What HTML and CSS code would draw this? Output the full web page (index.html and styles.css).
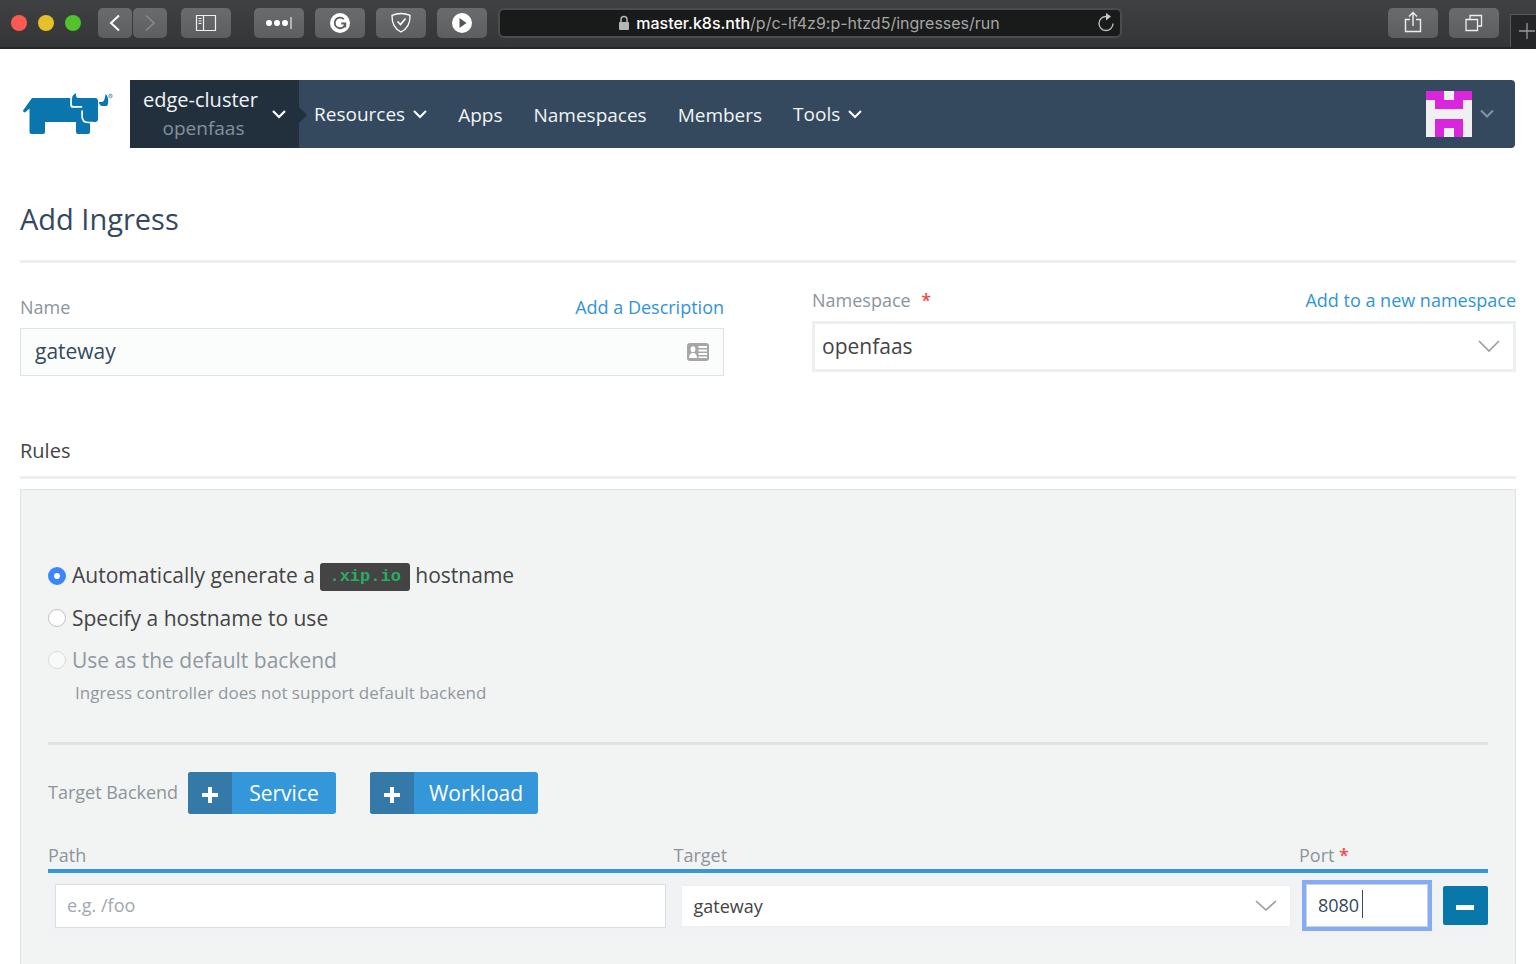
FILE: index.html
```html
<!DOCTYPE html>
<html lang="en">
<head>
<meta charset="utf-8">
<title>Add Ingress</title>
<link rel="stylesheet" href="styles.css">
</head>
<body>
<div class="chrome">
  <div class="lights"><span class="light red"></span><span class="light yellow"></span><span class="light green"></span></div>
  <div class="history">
    <button class="tool small" aria-label="Back"><svg width="34" height="30" viewBox="0 0 34 30"><path d="M21 7.500l-8 7.500 8 7.500" fill="none" stroke="#fff" stroke-width="2"/></svg></button>
    <button class="tool small" aria-label="Forward"><svg width="34" height="30" viewBox="0 0 34 30"><path d="M13 7.500l8 7.500-8 7.500" fill="none" stroke="#8a8b8d" stroke-width="1.500"/></svg></button>
  </div>
  <button class="tool sidebar" aria-label="Sidebar"><svg width="50" height="30" viewBox="0 0 50 30"><path d="M15.500 7.500h19v15h-19zM22.500 7.500v15M17.500 10.500h3M17.500 13h3M17.500 15.500h3" fill="none" stroke="#f0f0f0" stroke-width="1.200"/></svg></button>
  <div class="extensions">
    <button class="tool" aria-label="Passwords"><svg width="50" height="30" viewBox="0 0 50 30"><g fill="#fff"><circle cx="15" cy="15" r="3"/><circle cx="23" cy="15" r="3"/><circle cx="31" cy="15" r="3"/></g><path d="M37 9v12" stroke="#d5d5d5" stroke-width="1.400"/></svg></button>
    <button class="tool" aria-label="Grammar"><svg width="50" height="30" viewBox="0 0 50 30"><circle cx="25" cy="15" r="10" fill="#fff"/><path d="M28.800 11.200a5.300 5.300 0 1 0 1.500 4.300h-4M30.300 15.500v4" fill="none" stroke="#5b5c5e" stroke-width="1.800"/></svg></button>
    <button class="tool" aria-label="Ad blocker"><svg width="50" height="30" viewBox="0 0 50 30"><path d="M25 5.500c3 0 6.500.7 9 1.800.3 8-2.500 13.500-9 16.700-6.500-3.200-9.300-8.700-9-16.700 2.500-1.100 6-1.800 9-1.800z" fill="none" stroke="#fff" stroke-width="1.300"/><path d="M21.500 13.500l3 3 5-6" fill="none" stroke="#fff" stroke-width="1.600"/></svg></button>
    <button class="tool" aria-label="Play"><svg width="50" height="30" viewBox="0 0 50 30"><circle cx="25" cy="15" r="10" fill="#fff"/><path d="M22.500 10v10l7-5z" fill="#555658"/></svg></button>
  </div>
  <div class="address">
    <div class="url"><svg width="12" height="16" viewBox="0 0 12 16"><path d="M3 7V4.500a3 3 0 0 1 6 0V7" fill="none" stroke="#b5b5b5" stroke-width="1.500"/><rect x="1" y="7" width="10" height="8" rx="1" fill="#b5b5b5"/></svg><span><b>master.k8s.nth</b>/p/c-lf4z9:p-htzd5/ingresses/run</span></div>
    <button class="reload" aria-label="Reload"><svg width="18" height="20" viewBox="0 0 18 20"><path d="M9 3.500a7 7 0 1 0 7 7" fill="none" stroke="#b8b8b8" stroke-width="1.400"/><path d="M9 0l5 3.500-5 4z" fill="#c8c8c8"/></svg></button>
  </div>
  <div class="actions">
    <button class="tool" aria-label="Share"><svg width="50" height="30" viewBox="0 0 50 30"><path d="M22 11.500h-4.500v12h15v-12H28M25 18V5M21 8.500L25 4.500l4 4" fill="none" stroke="#eee" stroke-width="1.400"/></svg></button>
    <button class="tool" aria-label="Tab overview"><svg width="50" height="30" viewBox="0 0 50 30"><path d="M17 11.500h11.500V22.500H17zM21 11V7.500h11.500v10.500H29" fill="none" stroke="#eee" stroke-width="1.300"/></svg></button>
  </div>
  <button class="newtab" aria-label="New tab"><svg width="16" height="16" viewBox="0 0 16 16"><path d="M8 0v16M0 8h16" stroke="#999" stroke-width="1.300"/></svg></button>
</div>

<header class="header">
  <a class="logo" href="#" aria-label="Rancher"><svg width="92" height="42" viewBox="0 0 92 42"><g fill="#0b76ad"><path d="M10 5H48.500V13q0 1.500 1.500 1.500H60v9q0 6.500 7 6.500h1V39q0 2-2 2H56q-2 0-2-2V29H23V39q0 2-2 2H9.500q-2 0-2-2V15.500L3 19.500q-2 0-2-2z"/><path d="M50 11.500V6q.3-4 3-5.500h1c0 3.500.5 4.500 2.500 4.500H73q3 0 3 3V26q0 3-3 3H66.500q-5.500 0-5.500-5.500V18l-1.500-1v-3.500H52q-2 0-2-2z"/><path d="M77 9h3q3-1 3.500-8c3 2.500 3 7 2.500 10q-.3 2-2 2h-4q-3-1-3-4z"/></g><path d="M49.200 4v8q0 1.800 2 1.800h9M60 17.500v6q0 6 6.500 6H71" fill="none" stroke="#fff" stroke-width="1.500"/><circle cx="88.500" cy="3" r="1.800" fill="none" stroke="#0b76ad" stroke-width=".6"/><path d="M88 4V2h1v1l.5 1" fill="none" stroke="#0b76ad" stroke-width=".4"/></svg></a>
  <nav class="nav">
    <button class="cluster">
      <span class="scope"><span>edge-cluster</span><span class="project">openfaas</span></span>
      <svg class="chev" width="14" height="10" viewBox="0 0 14 10"><path d="M1 2l6 6 6-6" fill="none" stroke="#fff" stroke-width="2.200"/></svg>
    </button>
    <div class="links">
      <button class="drop">Resources <svg width="14" height="10" viewBox="0 0 14 10"><path d="M1 2l6 6 6-6" fill="none" stroke="#fff" stroke-width="2"/></svg></button>
      <a href="#">Apps</a>
      <a href="#">Namespaces</a>
      <a href="#">Members</a>
      <button class="drop">Tools <svg width="14" height="10" viewBox="0 0 14 10"><path d="M1 2l6 6 6-6" fill="none" stroke="#fff" stroke-width="2"/></svg></button>
    </div>
    <button class="user" aria-label="Account">
      <svg width="46" height="46" viewBox="0 0 5 5" shape-rendering="crispEdges"><path d="M0 0h5v5H0z" fill="#f0f0f0"/><path d="M0 0h2v1h1V0h2v1H4v1H1V1H0zM1 3h3v2H3V4H2v1H1z" fill="#d926dc"/></svg>
      <svg width="14" height="10" viewBox="0 0 14 10"><path d="M1 1.500l6 6 6-6" fill="none" stroke="#84929d" stroke-width="2"/></svg>
    </button>
  </nav>
</header>

<main class="main">
  <h1>Add Ingress</h1>
  <form class="form">
    <div class="fields">
      <div class="field name">
        <div class="labels"><label for="name">Name</label><a href="#">Add a Description</a></div>
        <div class="control"><input id="name" type="text" value="gateway"><svg class="card" width="22" height="18" viewBox="0 0 22 18"><rect width="22" height="18" rx="3" fill="#a6a6a6"/><g fill="#fff"><ellipse cx="6" cy="6.200" rx="2.400" ry="3"/><path d="M2 15c0-3 1.500-4.500 3-5h2c1.500.5 3 2 3 5zM11.500 3H20v2h-8.500zM11.500 6.500H20v2h-8.500zM11.500 10H20v2h-8.500zM11.500 13.500H20V15h-8.500z"/></g></svg></div>
      </div>
      <div class="field">
        <div class="labels"><label for="ns">Namespace <span class="req">*</span></label><a href="#">Add to a new namespace</a></div>
        <div class="control"><select id="ns"><option>openfaas</option></select><svg class="arrow" width="22" height="12" viewBox="0 0 22 12"><path d="M1 1l10 10L21 1" fill="none" stroke="#929ba1" stroke-width="1.600"/></svg></div>
      </div>
    </div>
    <h2>Rules</h2>
    <section class="panel">
      <div class="choices">
        <label><input type="radio" name="host" checked><span>Automatically generate a <code>.xip.io</code> hostname</span></label>
        <label><input type="radio" name="host"><span>Specify a hostname to use</span></label>
        <label class="off"><input type="radio" name="host" disabled><span>Use as the default backend</span></label>
        <p>Ingress controller does not support default backend</p>
      </div>
      <div class="backend">
        <span class="caption">Target Backend</span>
        <button type="button" class="add service"><span class="plus"><svg width="16" height="16" viewBox="0 0 16 16"><path d="M8 0v16M0 8h16" stroke="#fff" stroke-width="4"/></svg></span><span class="text">Service</span></button>
        <button type="button" class="add workload"><span class="plus"><svg width="16" height="16" viewBox="0 0 16 16"><path d="M8 0v16M0 8h16" stroke="#fff" stroke-width="4"/></svg></span><span class="text">Workload</span></button>
      </div>
      <table>
        <colgroup><col><col><col class="c-port"><col class="c-remove"></colgroup>
        <thead><tr><th>Path</th><th>Target</th><th colspan="2">Port <span class="req">*</span></th></tr></thead>
        <tbody><tr>
          <td class="path"><input type="text" aria-label="Path" placeholder="e.g. /foo"></td>
          <td class="target"><div class="control"><select aria-label="Target"><option>gateway</option></select><svg class="arrow" width="22" height="12" viewBox="0 0 22 12"><path d="M1 1l10 9L21 1" fill="none" stroke="#929ba1" stroke-width="1.600"/></svg></div></td>
          <td class="port"><div class="control"><input type="text" aria-label="Port" value="8080"><span class="caret"></span></div></td>
          <td class="remove"><button type="button" aria-label="Remove"><svg width="18" height="5" viewBox="0 0 18 5"><path d="M0 0h18v5H0z" fill="#fff"/></svg></button></td>
        </tr></tbody>
      </table>
    </section>
  </form>
</main>
</body>
</html>
```

FILE: styles.css
```css
* { box-sizing: border-box; }
body {
  margin: 0;
  min-height: 100vh;
  display: flex;
  flex-direction: column;
  background: #fff;
  color: #444;
  font: 400 21px/28px "Open Sans", "Noto Sans", sans-serif;
}
button, input, select { font: inherit; color: inherit; margin: 0; }
button { border: 0; padding: 0; background: none; }
a { color: #3094d8; text-decoration: none; }
svg { display: block; flex: none; }

/* Browser toolbar */
.chrome {
  display: flex;
  height: 49px;
  padding: 8px 0 0 11px;
  background: linear-gradient(#404143, #343536);
  border-bottom: 2px solid #272526;
}
.lights { display: flex; gap: 11px; padding-top: 7px; width: 87px; }
.light { width: 16px; height: 16px; border-radius: 50%; }
.red { background: #ff5a52; }
.yellow { background: #e6c029; }
.green { background: #53c22b; }
.history { display: flex; gap: 1px; }
.tool {
  width: 50px;
  height: 30px;
  border-radius: 5px;
  background: linear-gradient(#6a6b6d, #5d5e60);
}
.tool.small { width: 34px; }
.sidebar { margin: 0 23px 0 14px; }
.extensions { display: flex; gap: 11px; }
.address {
  flex: 1;
  max-width: 624px;
  height: 30px;
  margin-left: 11px;
  display: flex;
  align-items: center;
  padding: 0 5px 0 21px;
  border: 2px solid #4b4c4e;
  border-radius: 6px;
  background: #191a1a;
}
.url {
  flex: 1;
  display: flex;
  justify-content: center;
  align-items: center;
  gap: 6px;
  color: #a5a5a5;
  font: 400 16px/20px Inter, sans-serif;
}
.url b { color: #fff; font-weight: 500; }
.actions { display: flex; gap: 11px; margin-left: auto; }
.newtab {
  width: 26px;
  height: 33px;
  margin: 6px 0 0 11px;
  padding-left: 8px;
  overflow: hidden;
  border: solid #58595b;
  border-width: 1px 0 0 1px;
  background: #252627;
}

/* Top navigation */
.header { display: flex; padding: 31px 21px 0; }
.logo { width: 109px; padding: 13px 0 0 1px; }
.nav {
  flex: 1;
  display: flex;
  height: 68px;
  border-radius: 0 4px 4px 0;
  background: #34495e;
  color: #f2f4f5;
  font-size: 19px;
}
.cluster {
  position: relative;
  display: flex;
  align-items: center;
  justify-content: space-between;
  width: 169px;
  padding: 0 13px;
  background: #22303d;
  font-size: 20px;
}
.cluster::after {
  content: "";
  position: absolute;
  left: 100%;
  top: 27px;
  border: solid transparent;
  border-width: 8px 0 8px 8px;
  border-left-color: #22303d;
}
.scope { display: flex; flex-direction: column; text-align: center; }
.project { color: #84909a; padding-left: 6px; font-size: 19px; }
.links { display: flex; align-items: center; gap: 31px; padding-left: 15px; }
.links a { color: inherit; padding-top: 2px; }
.drop { display: flex; align-items: center; gap: 8px; }
.user { display: flex; align-items: center; gap: 8px; margin-left: auto; padding-right: 21px; }

/* Page */
.main { flex: 1; display: flex; flex-direction: column; padding: 51px 20px 0; }
h1 {
  margin: 0;
  padding-bottom: 21px;
  border-bottom: 3px solid #edf0f0;
  color: #34495e;
  font-size: 29px;
  font-weight: 400;
  line-height: 40px;
}
.form { flex: 1; display: flex; flex-direction: column; }
.fields { display: grid; grid-template-columns: 1fr 1fr; gap: 88px; padding-top: 25px; }
.name { padding-top: 7px; }
.labels { display: flex; justify-content: space-between; height: 33px; line-height: 24px; font-size: 18px; }
label[for] { color: #8b959c; }
.req { color: #f04848; font-weight: 600; }
label .req { padding-left: 6px; }
.control { position: relative; }
.control input, .control select, .path input { display: block; width: 100%; border-radius: 0; outline: 0; }
select { appearance: none; background: #fff; }
#name { height: 48px; padding: 0 14px 2px; border: 1px solid #dce4e5; background: #fbfdfc; color: #34495e; }
.card { position: absolute; right: 15px; top: 15px; }
#ns { height: 51px; padding: 0 7px 2px; border: 3px solid #edf0f0; }
.arrow { position: absolute; right: 16px; top: 19px; pointer-events: none; }
h2 {
  margin: 61px 0 10px;
  padding-bottom: 11px;
  border-bottom: 3px solid #edf0f0;
  font-size: 20px;
  font-weight: 400;
  line-height: 28px;
}
.panel {
  flex: 1;
  padding: 71px 27px 24px;
  border: 1px solid #dce3e4;
  border-bottom: 0;
  background: #f2f4f4;
}
.choices { padding-bottom: 37px; border-bottom: 3px solid #dde3e4; }
.choices label { display: flex; align-items: center; gap: 6px; height: 30px; margin-bottom: 12px; }
.choices input {
  appearance: none;
  width: 18px;
  height: 18px;
  border: 1px solid #bfc1c2;
  border-radius: 50%;
  background: #fff;
}
.choices input:checked { border: 6px solid #3b86fc; }
.choices .off { color: #8f989f; }
.off input { border-color: #d8dadb; background: #f8f9f9; }
.choices p { margin: -6px 0 0; padding-left: 27px; color: #8f989f; font-size: 17px; line-height: 24px; }
code {
  display: inline-block;
  vertical-align: 2px;
  padding: 0 9px;
  border-radius: 3px;
  background: #444;
  color: #27ae60;
  font: 700 17px/28px "Liberation Mono", monospace;
}
.backend { display: flex; align-items: center; padding-top: 27px; }
.caption { width: 140px; padding-bottom: 2px; color: #8b959c; font-size: 18px; }
.add { display: flex; height: 42px; border-radius: 3px; overflow: hidden; background: #3497da; color: #fff; }
.service { width: 148px; margin-right: 34px; }
.workload { width: 168px; }
.plus { width: 44px; padding: 15px 0 0 14px; height: 42px; background: #3579a8; }
.text { flex: 1; line-height: 42px; }

table { width: 100%; margin-top: 27px; border-collapse: collapse; table-layout: fixed; }
.c-port { width: 138px; }
.c-remove { width: 51px; }
th {
  height: 30px;
  padding: 0 0 1px;
  border-bottom: 4px solid #3497da;
  color: #8b959c;
  font-size: 18px;
  font-weight: 400;
  line-height: 24px;
  text-align: left;
}
tbody { background: #f0f2f4; }
td { height: 67px; padding: 0; font-size: 18px; }
.path { padding: 0 7px; }
.path input { height: 44px; padding: 0 11px 2px; border: 1px solid #d8e0e1; background: #fff; }
::placeholder { color: #a0a8ae; }
.target { padding: 0 8px; }
.target select { height: 42px; padding: 0 11px; border: 1px solid #edf0f0; }
.target .arrow { right: 14px; top: 15px; }
.port { padding: 0 9px 0 7px; }
.port input { height: 43px; padding: 0 11px 2px; border: 1px solid #ccd3d8; background: #fff; color: #34495e; box-shadow: 0 0 0 4px #85abf6; }
.caret { position: absolute; left: 56px; top: 6px; width: 1px; height: 28px; background: #34495e; }
.remove { padding-left: 6px; }
.remove button { display: flex; align-items: center; justify-content: center; width: 45px; height: 39px; border-radius: 2px; background: #0877aa; padding-top: 4px; }
```
